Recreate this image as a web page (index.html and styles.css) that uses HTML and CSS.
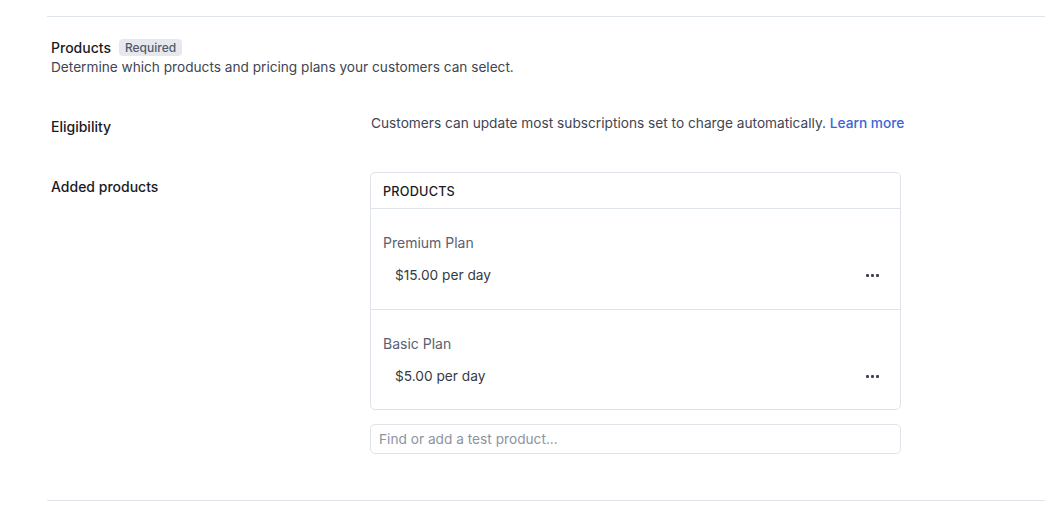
FILE: index.html
```html
<!DOCTYPE html>
<html>
<head>
<meta charset="utf-8">
<link rel="stylesheet" href="styles.css">
</head>
<body>
<div class="page">
  <section class="section">
    <div class="head">
      <div class="title-row">
        <span class="title">Products</span>
        <span class="badge">Required</span>
      </div>
      <div class="desc">Determine which products and pricing plans your customers can select.</div>
    </div>

    <div class="row row-elig">
      <div class="label label-elig">Eligibility</div>
      <div class="value value-elig">Customers can update most subscriptions set to charge automatically. <a class="link" href="#">Learn more</a></div>
    </div>

    <div class="row row-added">
      <div class="label">Added products</div>
      <div class="value">
        <div class="card">
          <div class="card-head">PRODUCTS</div>
          <div class="item">
            <div class="item-name">Premium Plan</div>
            <div class="price-row">
              <span class="price">$15.00 per day</span>
              <span class="dots"><i></i><i></i><i></i></span>
            </div>
          </div>
          <div class="item">
            <div class="item-name">Basic Plan</div>
            <div class="price-row">
              <span class="price">$5.00 per day</span>
              <span class="dots"><i></i><i></i><i></i></span>
            </div>
          </div>
        </div>
        <input class="search" type="text" placeholder="Find or add a test product...">
      </div>
    </div>
  </section>
</div>
</body>
</html>
```

FILE: styles.css
```css
* { box-sizing: border-box; }
html, body { margin: 0; padding: 0; background: #fff; }
body {
  font-family: Inter, "Noto Sans", sans-serif;
  font-size: 14px;
  color: #353a44;
  -webkit-font-smoothing: antialiased;
}
.page {
  padding: 16px 0 0 47px;
}
.section {
  border-top: 1px solid #dfe4ea;
  border-bottom: 1px solid #dfe4ea;
  padding: 20px 0 46px 4px;
}
.title-row {
  display: flex;
  align-items: center;
  gap: 8px;
  height: 20px;
}
.title {
  color: #1a1b25;
  font-weight: 500;
  font-size: 14px;
}
.badge {
  background: #e5e9ee;
  color: #545969;
  font-size: 12px;
  font-weight: 500;
  padding: 0 6px;
  border-radius: 4px;
  height: 17px;
  line-height: 17px;
}
.desc {
  color: #414552;
  font-size: 13.65px;
  line-height: 20px;
}
.row {
  display: flex;
}
.row-elig {
  margin-top: 36px;
}
.row-added {
  margin-top: 35px;
}
.label {
  width: 319px;
  flex: none;
  color: #1a1b25;
  font-size: 14px;
  font-weight: 500;
  line-height: 20px;
  padding-top: 5px;
}
.label-elig {
  padding-top: 0;
  margin-top: 4px;
}
.value {
  width: 531px;
  font-size: 13.7px;
  line-height: 20px;
  color: #414552;
}
.value-elig {
  width: auto;
  white-space: nowrap;
  padding-left: 1px;
}
.link {
  color: #3866d8;
  text-decoration: none;
  font-weight: 500;
}
.card {
  border: 1px solid #dfe4ea;
  border-radius: 5px;
}
.card-head {
  height: 36px;
  border-bottom: 1px solid #dfe4ea;
  padding: 9px 12px 0;
  font-size: 12.7px;
  font-weight: 500;
  letter-spacing: 0.2px;
  color: #1a1b25;
}
.item {
  padding: 24px 12px 24px 12px;
  height: 100px;
}
.item + .item { border-top: 1px solid #dfe4ea; }
.item-name {
  color: #596171;
  font-size: 14px;
  line-height: 20px;
}
.price-row {
  display: flex;
  align-items: center;
  justify-content: space-between;
  margin-top: 12px;
  padding: 0 9px 0 12px;
  height: 20px;
}
.price {
  color: #353a44;
  font-size: 13.7px;
}
.dots {
  display: flex;
  gap: 2px;
}
.dots i {
  display: block;
  width: 3px;
  height: 3px;
  background: #414552;
  border-radius: 1px;
}
.search {
  display: block;
  margin-top: 14px;
  width: 531px;
  height: 30px;
  border: 1px solid #dfe4ea;
  border-radius: 5px;
  padding: 0 8px;
  font-family: Inter, "Noto Sans", sans-serif;
  font-size: 13.7px;
  color: #353a44;
  outline: none;
}
.search::placeholder { color: #8c93a1; }
```
